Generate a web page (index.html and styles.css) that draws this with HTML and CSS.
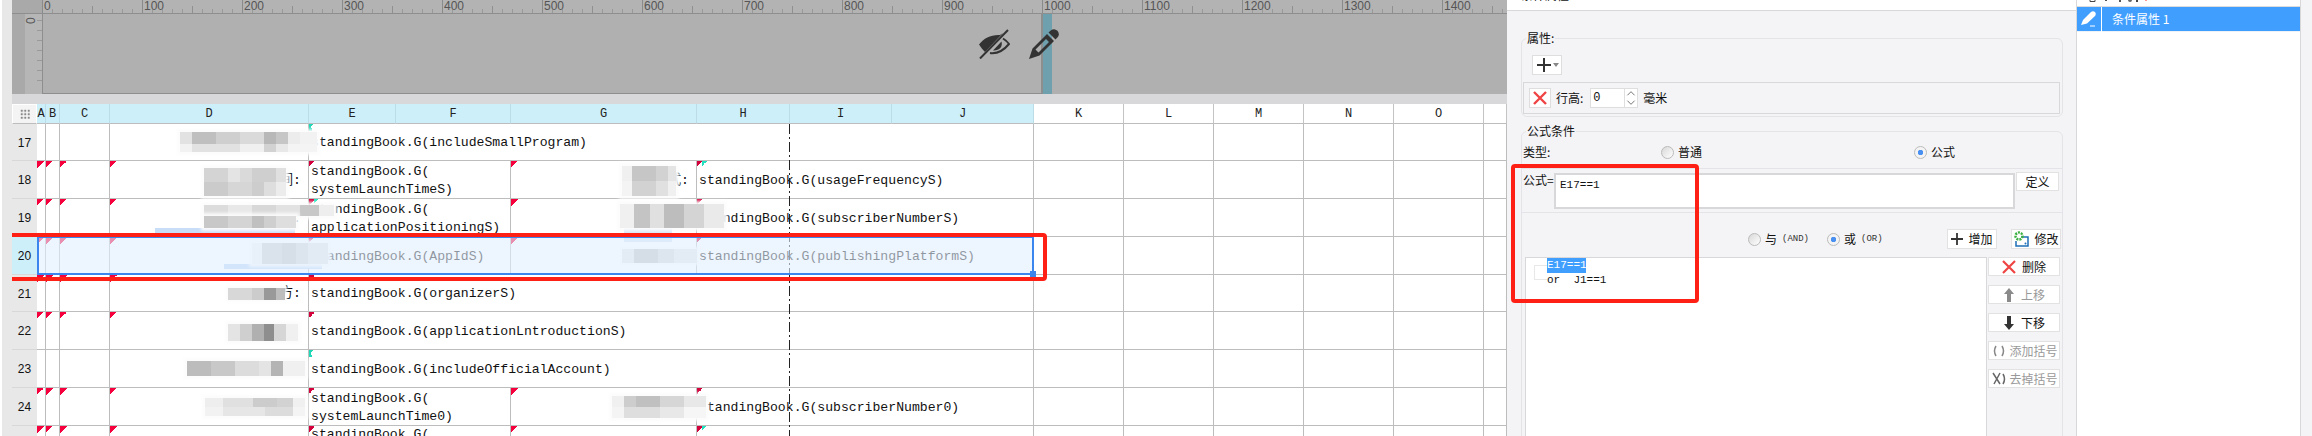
FILE: index.html
```html
<!DOCTYPE html>
<html lang="zh-CN">
<head>
<meta charset="utf-8">
<title>条件属性</title>
<link rel="stylesheet" href="styles.css">
</head>
<body>
<div class="rail"></div>
<main class="work">
  <div class="ruler-row">
    <div class="ruler-corner"></div>
    <div class="ruler">
      <span>0</span><span>100</span><span>200</span><span>300</span><span>400</span><span>500</span><span>600</span><span>700</span><span>800</span><span>900</span><span>1000</span><span>1100</span><span>1200</span><span>1300</span><span>1400</span>
    </div>
  </div>
  <div class="canvas-row">
    <div class="gutter"></div>
    <div class="vruler"><span>0</span></div>
    <div class="page"></div>
    <div class="margin-strip"></div>
    <svg class="ico-eye" viewBox="0 0 32 30" aria-hidden="true">
      <path fill="#333" d="M1 15.5C6 9 13 5.5 22 6L25 4 7 23C5 21 3 18.500 1 15.500Z"/>
      <path fill="none" stroke="#333" stroke-width="2" d="M12 24C19 25 26 21 31 15C29.500 13 27.500 11 25 9.500"/>
      <path fill="#333" d="M15 21.500C21 22 25 18 23.500 12.500Z"/>
      <path stroke="#333" stroke-width="2" d="M2 29.500L30 1"/>
    </svg>
    <svg class="ico-pen" viewBox="0 0 30 30" aria-hidden="true">
      <path fill="#333" fill-rule="evenodd" d="M0 30L3.500 19.500 18 5 25 12 10.500 26.500ZM6.500 20.500L9.500 23.500 20 13 17 10Z"/>
      <path fill="#333" d="M19.500 3.500L22 1.200Q25.500-1 28.500 1.800Q31 5 28.800 8L26.500 10.500Z"/>
    </svg>
  </div>
  <div class="band"></div>
  <div class="sheet">
    <div class="corner"><i></i></div>
    <div class="ch on">A</div><div class="ch on">B</div><div class="ch on">C</div><div class="ch on">D</div><div class="ch on">E</div><div class="ch on">F</div><div class="ch on">G</div><div class="ch on">H</div><div class="ch on">I</div><div class="ch on">J</div><div class="ch">K</div><div class="ch">L</div><div class="ch">M</div><div class="ch">N</div><div class="ch">O</div><div class="ch"></div>

    <div class="rh">17</div><div class="c"></div><div class="c"></div><div class="c"></div><div class="c"></div>
    <div class="c s6 fn ft">standingBook.G(includeSmallProgram)</div>
    <div class="c"></div><div class="c"></div><div class="c"></div><div class="c"></div><div class="c"></div><div class="c"></div>

    <div class="rh">18</div><div class="c fr"></div><div class="c fr"></div><div class="c fr"></div><div class="c fr lab">间:</div>
    <div class="c s2 fn">standingBook.G(<br>systemLaunchTimeS)</div>
    <div class="c fr lab">式:</div>
    <div class="c s3 fnt">standingBook.G(usageFrequencyS)</div>
    <div class="c"></div><div class="c"></div><div class="c"></div><div class="c"></div><div class="c"></div><div class="c"></div>

    <div class="rh">19</div><div class="c fr"></div><div class="c fr"></div><div class="c fr"></div><div class="c fr lab">位:</div>
    <div class="c s2 fnt">standingBook.G(<br>applicationPositioningS)</div>
    <div class="c fr"></div>
    <div class="c s3 fn">standingBook.G(subscriberNumberS)</div>
    <div class="c"></div><div class="c"></div><div class="c"></div><div class="c"></div><div class="c"></div><div class="c"></div>

    <div class="rh sel">20</div><div class="c fr"></div><div class="c fr"></div><div class="c fr"></div><div class="c fr"></div>
    <div class="c s2 fn">standingBook.G(AppIdS)</div>
    <div class="c fr"></div>
    <div class="c s3 fn">standingBook.G(publishingPlatformS)</div>
    <div class="c"></div><div class="c"></div><div class="c"></div><div class="c"></div><div class="c"></div><div class="c"></div>

    <div class="rh short">21</div><div class="c fr"></div><div class="c fr"></div><div class="c fr"></div><div class="c fr lab">方:</div>
    <div class="c s6 fn">standingBook.G(organizerS)</div>
    <div class="c"></div><div class="c"></div><div class="c"></div><div class="c"></div><div class="c"></div><div class="c"></div>

    <div class="rh">22</div><div class="c fr"></div><div class="c fr"></div><div class="c fr"></div><div class="c fr lab">介:</div>
    <div class="c s6 fn">standingBook.G(applicationLntroductionS)</div>
    <div class="c"></div><div class="c"></div><div class="c"></div><div class="c"></div><div class="c"></div><div class="c"></div>

    <div class="rh">23</div><div class="c"></div><div class="c"></div><div class="c"></div><div class="c"></div>
    <div class="c s6 ft">standingBook.G(includeOfficialAccount)</div>
    <div class="c"></div><div class="c"></div><div class="c"></div><div class="c"></div><div class="c"></div><div class="c"></div>

    <div class="rh">24</div><div class="c fr"></div><div class="c fr"></div><div class="c fr"></div><div class="c fr"></div>
    <div class="c s2 fn">standingBook.G(<br>systemLaunchTime0)</div>
    <div class="c fr"></div>
    <div class="c s3 fn">standingBook.G(subscriberNumber0)</div>
    <div class="c"></div><div class="c"></div><div class="c"></div><div class="c"></div><div class="c"></div><div class="c"></div>

    <div class="rh"></div><div class="c fr"></div><div class="c fr"></div><div class="c fr"></div><div class="c fr"></div>
    <div class="c s2 fn top">standingBook.G(</div>
    <div class="c fr"></div>
    <div class="c s3 fnt"></div>
    <div class="c"></div><div class="c"></div><div class="c"></div><div class="c"></div><div class="c"></div><div class="c"></div>

    <div class="pagebreak"></div>

    <div class="strip st19"></div>
    <div class="strip st19g"></div>
    <div class="strip st20"></div>
    <div class="mo m17"></div>
    <div class="mo m18"></div>
    <div class="mo m18g"></div>
    <div class="mo m19"></div>
    <div class="mo m19b"></div>
    <div class="mo m19g"></div>
    <div class="mo m20"></div>
    <div class="mo m20g"></div>
    <div class="mo m21"></div>
    <div class="mo m22"></div>
    <div class="mo m23"></div>
    <div class="mo m24"></div>
    <div class="mo m24g"></div>

    <div class="selection"><i></i></div>
    <div class="redbox rb1"></div>
  </div>
</main>

<aside class="props">
  <div class="head"><span>条件属性</span></div>

  <fieldset class="group">
    <legend>属性:</legend>
    <div class="addbtn">
      <svg viewBox="0 0 14 14" width="14" height="14" aria-hidden="true"><path stroke="#333" stroke-width="2" d="M7 0V14M0 7H14"/></svg>
      <i class="caret"></i>
    </div>
    <div class="rowbox">
      <div class="xbtn">
        <svg viewBox="0 0 14 14" width="14" height="14" aria-hidden="true"><path stroke="#ef4444" stroke-width="2.400" d="M1 1L13 13M13 1L1 13"/></svg>
      </div>
      <span class="lbl">行高:</span>
      <div class="spin">
        <span class="spinval">0</span>
        <div class="spinbtns">
          <svg viewBox="0 0 12 10" aria-hidden="true"><path fill="none" stroke="#666" d="M2 7L6 3 10 7"/></svg>
          <svg viewBox="0 0 12 10" aria-hidden="true"><path fill="none" stroke="#666" d="M2 3L6 7 10 3"/></svg>
        </div>
      </div>
      <span>毫米</span>
    </div>
  </fieldset>

  <fieldset class="group g2">
    <legend>公式条件</legend>
    <div class="type-row">
      <span class="typelabel">类型:</span>
      <label class="opt"><i class="radio"></i>普通</label>
      <label class="opt"><i class="radio on"></i>公式</label>
    </div>
    <div class="rule"></div>
    <div class="formula-row">
      <span class="flabel">公式=</span>
      <div class="textarea">E17==1</div>
      <div class="btn defbtn">定义</div>
    </div>
    <div class="rule r2"></div>
    <div class="logic-row">
      <label class="opt"><i class="radio"></i>与<small>(AND)</small></label>
      <label class="opt"><i class="radio on"></i>或<small>(OR)</small></label>
      <div class="btn addc">
        <svg viewBox="0 0 12 12" width="12" height="12" aria-hidden="true"><path stroke="#333" stroke-width="1.800" d="M6 0V12M0 6H12"/></svg>增加
      </div>
      <div class="btn addc">
        <svg viewBox="0 0 16 16" width="16" height="16" aria-hidden="true"><path fill="none" stroke="#1c6fb5" stroke-width="1.500" d="M8 6H15V15H3V10"/><circle cx="6" cy="5" r="3.500" fill="none" stroke="#3cb043" stroke-width="2.500" stroke-dasharray="2 1"/><circle cx="12.500" cy="12.500" r="1" fill="#1c6fb5"/></svg>修改
      </div>
    </div>
    <div class="list-row">
      <div class="tree">
        <i class="bracket"></i>
        <div class="tree-items">
          <div class="tree-sel">E17==1</div>
          <div class="tree-item">or&nbsp;&nbsp;J1==1</div>
        </div>
      </div>
      <div class="sidebtns">
        <div class="btn sb"><svg viewBox="0 0 14 14" width="14" height="14" aria-hidden="true"><path stroke="#ef4444" stroke-width="2.200" d="M1 1L13 13M13 1L1 13"/></svg>删除</div>
        <div class="btn sb off"><svg viewBox="0 0 12 14" width="12" height="14" aria-hidden="true"><path fill="#8a8a8a" d="M6 0L11 6H8V14H4V6H1Z"/></svg>上移</div>
        <div class="btn sb"><svg viewBox="0 0 12 14" width="12" height="14" aria-hidden="true"><path fill="#333" d="M6 14L11 8H8V0H4V8H1Z"/></svg>下移</div>
        <div class="btn sb off wide"><svg viewBox="0 0 14 14" width="14" height="14" aria-hidden="true"><path fill="none" stroke="#888" stroke-width="1.500" d="M4 2Q1 7 4 12M10 2Q13 7 10 12"/></svg>添加括号</div>
        <div class="btn sb off wide"><svg viewBox="0 0 14 14" width="14" height="14" aria-hidden="true"><path fill="none" stroke="#666" stroke-width="1.500" d="M1 1L8 12M8 1L2 12M11 2Q14 7 11 12"/></svg>去掉括号</div>
      </div>
    </div>
  </fieldset>

  <div class="redbox rb2"></div>
</aside>

<aside class="cond">
  <div class="cond-tools">
    <svg viewBox="0 0 70 6" width="70" height="6" aria-hidden="true"><path fill="none" stroke="#444" d="M13 -3V1.500H18V-3"/><rect x="28" y="0" width="2" height="1" fill="#555"/><rect x="42" y="0" width="2" height="2" fill="#555"/><circle cx="53" cy="0" r="2" fill="#666"/><rect x="59" y="0" width="2" height="2" fill="#444"/><rect x="68" y="0" width="2" height="1" fill="#f99"/></svg>
  </div>
  <div class="cond-item">
    <div class="cond-ico">
      <svg viewBox="0 0 16 16" width="16" height="16" aria-hidden="true"><path fill="#fff" d="M0 14L2 9 10 1Q12-.5 14 1Q15.500 3 14 5L6 12.500ZM9 14.500H14V15.500H9Z"/></svg>
    </div>
    <span>条件属性 1</span>
  </div>
</aside>
</body>
</html>
```
FILE: styles.css
```css
* { box-sizing: border-box; }
html, body { margin: 0; padding: 0; }
body {
  width: 2312px;
  height: 436px;
  display: flex;
  overflow: hidden;
  background: #f4f4f6;
  font: 12px/16px "Noto Sans CJK SC", "Liberation Sans", sans-serif;
  color: #111;
}

/* left rail */
.rail { width: 12px; flex: none; background: #e8e8e8; border-left: 2px solid #fff; }

/* work area */
.work { width: 1495px; flex: none; height: 436px; display: flex; flex-direction: column; overflow: hidden; }

.ruler-row { display: flex; height: 14px; flex: none; }
.ruler-corner { width: 30px; flex: none; background: #a9a9a9; border-bottom: 1px solid #8e8e8e; }
.ruler {
  flex: 1;
  display: flex;
  overflow: hidden;
  background-color: #b3b3b3;
  border-bottom: 1px solid #8e8e8e;
  background-image:
    repeating-linear-gradient(90deg, #8a8a8a 0 1px, transparent 1px 100px),
    repeating-linear-gradient(90deg, #909090 0 1px, transparent 1px 50px),
    repeating-linear-gradient(90deg, #999 0 1px, transparent 1px 10px);
  background-size: 100% 13px, 100% 7px, 100% 4px;
  background-position: 0 0, 0 bottom, 0 bottom;
  background-repeat: no-repeat;
}
.ruler span {
  flex: 0 0 100px;
  padding-left: 2px;
  font: 12px/13px "Liberation Sans", sans-serif;
  color: #555;
}

.canvas-row { position: relative; display: flex; height: 80px; flex: none; background: #b0b0b0; }
.gutter { width: 13px; flex: none; background: #a9a9a9; }
.vruler {
  width: 17px;
  flex: none;
  background-color: #b6b6b6;
  background-image: repeating-linear-gradient(180deg, #999 0 1px, transparent 1px 10px);
  background-size: 5px 100%;
  background-position: right -4px;
  background-repeat: no-repeat;
}
.vruler span {
  display: block;
  writing-mode: vertical-rl;
  transform: rotate(180deg);
  font: 12px/12px "Liberation Sans", sans-serif;
  color: #555;
  height: 10px;
  margin-top: 0;
  padding-left: 3px;
}
.page { width: 1001px; flex: none; border-left: 1px solid #8e8e8e; border-bottom: 1px solid #8e8e8e; border-right: 2px solid #8e8e8e; }
.margin-strip { width: 9px; flex: none; background: #6fa0ae; }
.ico-eye { position: absolute; left: 966px; top: 15px; width: 32px; height: 30px; }
.ico-pen { position: absolute; left: 1017px; top: 15px; width: 30px; height: 30px; }

.band { height: 10px; flex: none; background: #d8d8da; }

/* sheet */
.sheet {
  position: relative;
  flex: 1;
  display: grid;
  grid-template-columns: 25px 9px 14px 50px 199px 87px 115px 186px 93px 102px 142px 90px 90px 90px 90px 90px 23px;
  grid-template-rows: 20px 37px 38px 38px 38px 37px 38px 38px 38px 38px;
  align-content: start;
  background: #fff;
  font: 13.150px/18px "Liberation Mono", "Noto Sans CJK SC", monospace;
}
.corner { display: flex; align-items: center; justify-content: center; background: #f4f4f5; border: 1px solid #fff; border-bottom: 1px solid #bdbdbd; }
.corner i {
  width: 10px;
  height: 10px;
  background: radial-gradient(circle, #888 0 1.300px, transparent 1.400px) 0 0 / 3.500px 3.500px;
}
.ch {
  display: flex;
  align-items: center;
  justify-content: center;
  background: #fff;
  border-right: 1px solid #c4c4c4;
  border-bottom: 1px solid #bdbdbd;
  font-size: 12px;
  color: #222;
}
.ch.on { background: #cdeffa; border-right-color: #bcdce8; }

.rh {
  display: flex;
  align-items: center;
  justify-content: center;
  padding-top: 1px;
  background: #e8e8e8;
  font: 12px/16px "Liberation Sans", sans-serif;
  color: #111;
  border-bottom: 1px solid #d8d8d8;
}
.rh.sel { background: #cdeffa; }

.c {
  display: flex;
  align-items: center;
  padding: 2px 0 0 2px;
  border-right: 1px solid #bdbdbd;
  border-bottom: 1px solid #bdbdbd;
  background-repeat: no-repeat;
  color: #111;
  overflow: hidden;
  white-space: nowrap;
}
.c.top { align-items: flex-start; padding-top: 0; }
.s2 { grid-column: span 2; }
.s3 { grid-column: span 3; }
.s6 { grid-column: span 6; }
.lab { justify-content: flex-end; padding-right: 7px; }

/* cell flags */
.fr { background-image: linear-gradient(135deg, #f5003c 50%, transparent 50%); background-size: 7px 7px; }
.fn { background-image: linear-gradient(135deg, #d4003c 50%, transparent 50%); background-size: 5px 7px; }
.ft { background-image: linear-gradient(225deg, transparent 50%, #20d8b8 50%), linear-gradient(135deg, #20d8b8 50%, transparent 50%); background-size: 3px 7px, 5px 5px; }
.fnt { background-image: linear-gradient(135deg, #d4003c 50%, transparent 50%), linear-gradient(135deg, #20e0c0 50%, transparent 50%); background-size: 5px 7px, 5px 5px; background-position: 0 0, 5px 0; }

.pagebreak {
  position: absolute;
  left: 777px;
  top: 20px;
  bottom: 0;
  width: 1px;
  background: repeating-linear-gradient(180deg, #222 0 10px, transparent 10px 13px, #222 13px 15px, transparent 15px 18px);
}

/* blurred regions */
.strip { position: absolute; background: #c8ddf8; }
.st19 { left: 143px; top: 124px; width: 140px; height: 5px; }
.st19g { left: 612px; top: 124px; width: 48px; height: 14px; background: #d6e5f8; }
.st20 { left: 212px; top: 160px; width: 98px; height: 5px; background: #bdd7f7; }
.mo { position: absolute; box-shadow: 0 0 3px 3px rgba(252, 252, 252, .95); }
.m17 {
  left: 168px; top: 28px; width: 137px; height: 20px;
  background:
    linear-gradient(90deg, #e2e2e2 0 12px, #bfbfbf 0 36px, #cfcfcf 0 60px, #dadada 0 84px, #b8b8b8 0 96px, #c6c6c6 0 108px, #ececec 0 120px, #f2f2f2 0 137px) 0 0 / 100% 60% no-repeat,
    linear-gradient(90deg, #f2f2f2 0 12px, #e2e2e2 0 60px, #f0f0f0 0 84px, #d2d2d2 0 96px, #e8e8e8 0 108px, #f4f4f4 0 137px) 0 100% / 100% 40% no-repeat;
}
.m18 {
  left: 192px; top: 64px; width: 82px; height: 28px;
  background:
    linear-gradient(90deg, #d4d4d4 0 24px, #e4e4e4 0 36px, #dadada 0 48px, #cfcfcf 0 72px, #e0e0e0 0 82px) 0 0 / 100% 50% no-repeat,
    linear-gradient(90deg, #cbcbcb 0 24px, #d6d6d6 0 48px, #cdcdcd 0 60px, #dedede 0 72px, #ececec 0 82px) 0 100% / 100% 50% no-repeat;
}
.m18g {
  left: 610px; top: 62px; width: 54px; height: 30px;
  background:
    linear-gradient(90deg, #f0f0f0 0 10px, #c6c6c6 0 34px, #d2d2d2 0 46px, #e4e4e4 0 54px) 0 0 / 100% 50% no-repeat,
    linear-gradient(90deg, #f4f4f4 0 10px, #d2d2d2 0 34px, #e0e0e0 0 46px, #f0f0f0 0 54px) 0 100% / 100% 50% no-repeat;
}
.m19 {
  left: 192px; top: 101px; width: 130px; height: 11px;
  background: linear-gradient(90deg, #dcdcdc 0 24px, #e8e8e8 0 48px, #d8d8d8 0 72px, #e2e2e2 0 96px, #c8c8c8 0 115px, #eee 0 130px);
}
.m19b {
  left: 192px; top: 112px; width: 92px; height: 12px;
  background: linear-gradient(90deg, #c8c8c8 0 24px, #d4d4d4 0 48px, #c0c0c0 0 60px, #cfcfcf 0 72px, #dedede 0 92px);
}
.m19g {
  left: 608px; top: 100px; width: 104px; height: 24px;
  background:
    linear-gradient(90deg, #f0f0f0 0 14px, #c4c4c4 0 30px, #e0e0e0 0 44px, #bdbdbd 0 64px, #d4d4d4 0 84px, #eaeaea 0 104px);
}
.m20 {
  left: 240px; top: 139px; width: 76px; height: 21px;
  background: linear-gradient(90deg, #f2f2f2 0 10px, #cfcfcf 0 30px, #c6c6c6 0 44px, #d4d4d4 0 56px, #e4e4e4 0 76px);
}
.m20g {
  left: 610px; top: 145px; width: 75px; height: 14px;
  box-shadow: 0 0 2px 2px rgba(252, 252, 252, .9);
  background: linear-gradient(90deg, #e6e6e6 0 12px, #c4c4c4 0 36px, #d6d6d6 0 52px, #e6e6e6 0 75px);
}
.m21 {
  left: 216px; top: 184px; width: 57px; height: 12px;
  background: linear-gradient(90deg, #d8d8d8 0 24px, #cccccc 0 36px, #999 0 48px, #bdbdbd 0 57px);
  box-shadow: 0 0 2px 2px rgba(252, 252, 252, .9);
}
.m22 {
  left: 216px; top: 220px; width: 70px; height: 17px;
  background: linear-gradient(90deg, #e4e4e4 0 12px, #cfcfcf 0 24px, #b0b0b0 0 36px, #8e8e8e 0 46px, #d6d6d6 0 58px, #f0f0f0 0 70px);
}
.m23 {
  left: 175px; top: 257px; width: 118px; height: 15px;
  background: linear-gradient(90deg, #bcbcbc 0 24px, #c8c8c8 0 48px, #dcdcdc 0 72px, #e4e4e4 0 84px, #b4b4b4 0 96px, #f0f0f0 0 118px);
}
.m24 {
  left: 193px; top: 294px; width: 100px; height: 18px;
  background:
    linear-gradient(90deg, #eee 0 18px, #e0e0e0 0 48px, #cccccc 0 72px, #d2d2d2 0 88px, #f0f0f0 0 100px) 0 0 / 100% 50% no-repeat,
    linear-gradient(90deg, #f2f2f2 0 18px, #e6e6e6 0 60px, #dcdcdc 0 88px, #f4f4f4 0 100px) 0 100% / 100% 50% no-repeat;
}
.m24g {
  left: 600px; top: 292px; width: 94px; height: 22px;
  background:
    linear-gradient(90deg, #f0f0f0 0 12px, #cdcdcd 0 24px, #c0c0c0 0 48px, #d6d6d6 0 72px, #e8e8e8 0 94px) 0 0 / 100% 50% no-repeat,
    linear-gradient(90deg, #f4f4f4 0 12px, #dedede 0 48px, #e8e8e8 0 72px, #f6f6f6 0 94px) 0 100% / 100% 50% no-repeat;
}

/* selected row */
.selection {
  position: absolute;
  left: 25px;
  top: 133px;
  width: 997px;
  height: 38px;
  background: rgba(225, 238, 253, .6);
  border: 2px solid #3a85ee;
  border-top-width: 1px;
}
.selection i {
  position: absolute;
  right: -4px;
  bottom: -4px;
  width: 6px;
  height: 6px;
  background: #3a85ee;
}
.redbox { position: absolute; border: 4px solid #ff2015; border-radius: 4px; pointer-events: none; }
.rb1 { left: -9px; top: 129px; width: 1044px; height: 48px; }
.rb2 { left: 4px; top: 164px; width: 188px; height: 139px; }

/* properties panel */
.props { position: relative; width: 569px; flex: none; height: 436px; overflow: hidden; background: #f4f4f6; }
.head {
  height: 11px;
  padding-left: 14px;
  border-bottom: 1px solid #d8d8da;
  background: #fff;
  overflow: hidden;
}
.head span { display: block; margin-top: -13px; }
.group {
  margin: 19px 13px 0 14px;
  padding: 0;
  min-width: 0;
  border: 1px solid #e4e4e8;
  border-radius: 6px;
}
.group legend { margin-left: 4px; padding: 0 1px; font-size: 12px; line-height: 16px; }
.g2 { margin-top: 6px; height: 420px; }
.addbtn {
  width: 30px;
  height: 20px;
  margin: 9px 0 0 10px;
  display: flex;
  align-items: center;
  padding-left: 4px;
  gap: 2px;
  background: #fff;
  border: 1px solid #dedede;
}
.caret { width: 0; height: 0; border: 3px solid transparent; border-top: 4px solid #888; border-bottom: 0; }
.rowbox {
  height: 32px;
  margin: 7px 2px 2px 1px;
  padding-left: 5px;
  display: flex;
  align-items: center;
  border: 1px solid #d8d8da;
}
.xbtn {
  width: 22px;
  height: 20px;
  display: flex;
  align-items: center;
  justify-content: center;
  background: #fff;
  border: 1px solid #dedede;
}
.lbl { margin: 0 7px 0 5px; }
.spin {
  width: 48px;
  height: 20px;
  margin-right: 5px;
  display: flex;
  background: #fff;
  border: 1px solid #dedede;
}
.spinval { flex: 1; padding-left: 2px; font: 12px/18px "Liberation Mono", monospace; }
.spinbtns { width: 13px; display: flex; flex-direction: column; border-left: 1px solid #dedede; }
.spinbtns svg { width: 12px; height: 9px; }

.type-row {
  display: grid;
  grid-template-columns: 138px 253px 1fr;
  margin-top: 5px;
  height: 16px;
  padding-left: 1px;
}
.typelabel { margin-right: 0; }
.opt { display: flex; align-items: center; gap: 4px; }
.radio {
  width: 13px;
  height: 13px;
  flex: none;
  border: 1px solid #bbb;
  border-radius: 50%;
  background: linear-gradient(135deg, #d8d8d8, #fff);
}
.radio.on { background: radial-gradient(circle, #4a90f0 0 2.500px, #f4f4f4 3px); }
.rule { height: 1px; margin-top: 8px; background: #e4e4e8; }
.rule.r2 { margin-top: 3px; }
.formula-row {
  display: grid;
  grid-template-columns: 31px 461px 44px;
  height: 36px;
  margin-top: 4px;
  padding-left: 1px;
  align-items: start;
}
.flabel { margin-top: -1px; }
.textarea {
  height: 36px;
  padding: 2px 4px;
  background: #fff;
  border: 2px solid #d8d8da;
  font: 11px/16px "Liberation Mono", monospace;
}
.btn {
  display: flex;
  align-items: center;
  justify-content: center;
  background: #fff;
  border: 1px solid #e2e2e2;
}
.defbtn { height: 19px; margin-top: -1px; margin-left: 1px; }
.logic-row {
  display: grid;
  grid-template-columns: 79px 120px 64px 50px;
  height: 20px;
  margin-top: 16px;
  padding-left: 226px;
}
.logic-row small { margin-left: 1px; font: 9px/16px "Liberation Mono", monospace; color: #333; }
.addc { gap: 5px; width: 50px; height: 20px; }
.list-row { display: flex; margin: 8px 0 0 3px; height: 300px; }
.tree {
  width: 462px;
  height: 300px;
  padding: 0 0 0 8px;
  display: flex;
  background: #fff;
  border: 1px solid #d8d8da;
  font: 11px/15px "Liberation Mono", monospace;
}
.bracket { width: 13px; height: 15px; margin-top: 7px; border: 1px solid #e8e8e8; border-right: 0; flex: none; }
.tree-sel { width: 39px; background: #409eff; color: #fff; white-space: nowrap; }
.tree-item { white-space: nowrap; }
.sidebtns { width: 72px; margin-left: 1px; display: flex; flex-direction: column; gap: 9px; }
.sb { height: 19px; gap: 6px; }
.sb.off { color: #999; }
.sb.wide { gap: 3px; padding-left: 2px; }

/* conditional property list */
.cond { width: 225px; flex: none; height: 436px; background: #fff; border-left: 1px solid #d8d8da; border-right: 1px solid #d8d8da; overflow: hidden; }
.cond-tools { height: 7px; border-bottom: 1px solid #dcdcdc; display: flex; padding-left: 0; }
.cond-item {
  display: flex;
  align-items: center;
  height: 25px;
  background: #409eff;
  color: #fff;
  border-bottom: 1px solid #eef3f8;
}
.cond-ico { width: 25px; height: 25px; flex: none; display: flex; align-items: center; justify-content: center; border-right: 1px solid #fff; }
.cond-item span { margin-left: 10px; }
```
